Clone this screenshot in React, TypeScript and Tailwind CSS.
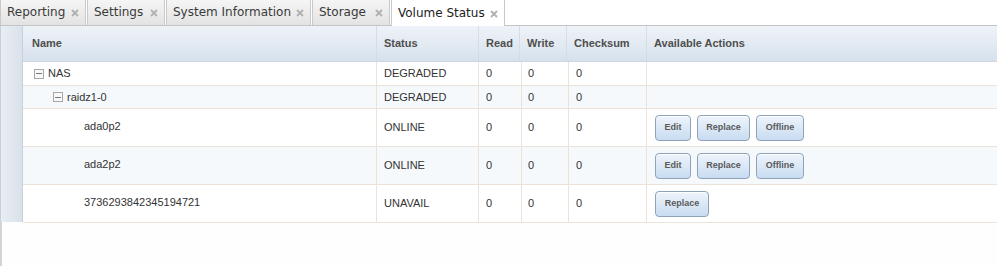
const tabs = [
  { label: 'Reporting', w: 'w-[86px]' },
  { label: 'Settings', w: 'w-[78px]' },
  { label: 'System Information', w: 'w-[145px]' },
  { label: 'Storage', w: 'w-[78px]' },
]

type Row = {
  name: string
  level: number
  expand?: boolean
  status: string
  h: string
  alt?: boolean
  actions: string[]
}

const rows: Row[] = [
  { name: 'NAS', level: 0, expand: true, status: 'DEGRADED', h: 'h-[24px]', actions: [] },
  { name: 'raidz1-0', level: 1, expand: true, status: 'DEGRADED', h: 'h-[23px]', alt: true, actions: [] },
  { name: 'ada0p2', level: 2, status: 'ONLINE', h: 'h-[38px]', actions: ['Edit', 'Replace', 'Offline'] },
  { name: 'ada2p2', level: 2, status: 'ONLINE', h: 'h-[38px]', alt: true, actions: ['Edit', 'Replace', 'Offline'] },
  { name: '3736293842345194721', level: 2, status: 'UNAVAIL', h: 'h-[38px]', actions: ['Replace'] },
]

const btnWidth: Record<string, string> = {
  Edit: 'w-[36px]',
  Replace: 'w-[53px]',
  Offline: 'w-[48px]',
}

function Expander() {
  return (
    <span className="w-[10px] h-[10px] border border-[#a8a8a8] bg-[#f8f8f8] flex items-center justify-center mr-[4px]">
      <span className="w-[6px] h-px bg-[#777]" />
    </span>
  )
}

function CloseX() {
  return (
    <svg width="8" height="8" viewBox="0 0 8 8" className="mt-[1px]">
      <path d="M1 1 L7 7 M7 1 L1 7" stroke="#b0b0b0" strokeWidth="1.8" />
    </svg>
  )
}

function App() {
  return (
    <div className="w-[997px] h-[266px] bg-[#fefefe] overflow-hidden font-['Liberation_Sans',Arial,sans-serif] text-[11px] text-[#333]">
      {/* tabs */}
      <div className="h-[26px] flex items-stretch gap-px border-b border-[#c4c4c4] bg-white font-['DejaVu_Sans',Verdana,sans-serif] text-[12px]">
        {tabs.map((t) => (
          <div key={t.label} className={`${t.w} flex items-center justify-between pl-[6px] pr-[6px] border-x border-[#c9c9c9] bg-linear-to-b from-[#f5f5f5] to-[#e3e3e3] text-[#3a3a3a]`}>
            <span className="-mt-px">{t.label}</span>
            <CloseX />
          </div>
        ))}
        <div className="w-[114px] -mb-px flex items-center justify-between pl-[6px] pr-[6px] border-x border-[#c9c9c9] bg-white text-[#222]">
          <span className="-mt-px">Volume Status</span>
          <CloseX />
        </div>
      </div>

      <div className="flex h-[240px] items-start">
        {/* gutter */}
        <div className="w-[23px] h-[196px] bg-linear-to-r from-[#e9eef4] to-[#d9e1eb] border-l border-r border-[#c7d0db]" />

        <div className="flex-1 flex flex-col">
          {/* header */}
          <div className="h-[36px] flex bg-linear-to-b from-[#eef3f8] to-[#d7e1ec] border-b border-[#cdd6e1] font-bold text-[#4f4f4f]">
            <div className="w-[354px] pl-[9px] flex items-center border-r border-[#d3dce7]">Name</div>
            <div className="w-[102px] pl-[7px] flex items-center border-r border-[#d3dce7]">Status</div>
            <div className="w-[41px] pl-[7px] flex items-center border-r border-[#d3dce7]">Read</div>
            <div className="w-[47px] pl-[7px] flex items-center border-r border-[#d3dce7]">Write</div>
            <div className="w-[80px] pl-[7px] flex items-center border-r border-[#d3dce7]">Checksum</div>
            <div className="flex-1 pl-[7px] flex items-center">Available Actions</div>
          </div>

          {rows.map((r) => (
            <div key={r.name} className={`${r.h} flex border-b border-[#ebe3d8] ${r.alt ? 'bg-[#f6f9fc]' : 'bg-white'}`}>
              <div className="w-[354px] flex items-center border-r border-[#ebe3d8]">
                {r.level === 0 && <span className="pl-[11px] flex items-center"><Expander /></span>}
                {r.level === 1 && <span className="pl-[30px] flex items-center"><Expander /></span>}
                {r.level === 2 && <span className="pl-[61px]" />}
                <span className={r.level === 2 ? '-mt-[2px]' : ''}>{r.name}</span>
              </div>
              <div className="w-[102px] pl-[7px] flex items-center border-r border-[#ebe3d8]">{r.status}</div>
              <div className="w-[43px] pl-[7px] flex items-center border-r border-[#ebe3d8]">0</div>
              <div className="w-[47px] pl-[6px] flex items-center border-r border-[#ebe3d8]">0</div>
              <div className="w-[78px] pl-[7px] flex items-center border-r border-[#ebe3d8]">0</div>
              <div className="flex-1 pl-[8px] flex items-center gap-[6px]">
                {r.actions.map((a) => (
                  <button
                    key={a}
                    className={`${a === 'Replace' && r.actions.length === 1 ? 'w-[54px]' : btnWidth[a]} h-[26px] rounded-[4px] border border-[#8ea2ba] bg-linear-to-b from-[#eef4fb] to-[#c8dcf1] text-[9px] font-bold text-[#5a5a5a] shadow-[inset_0_1px_0_#fff]`}
                  >
                    {a}
                  </button>
                ))}
              </div>
            </div>
          ))}
        </div>
      </div>
      <div className="-mt-[44px] h-[44px] w-[2px] bg-[#d4d4d4]" />
    </div>
  )
}

export default App
